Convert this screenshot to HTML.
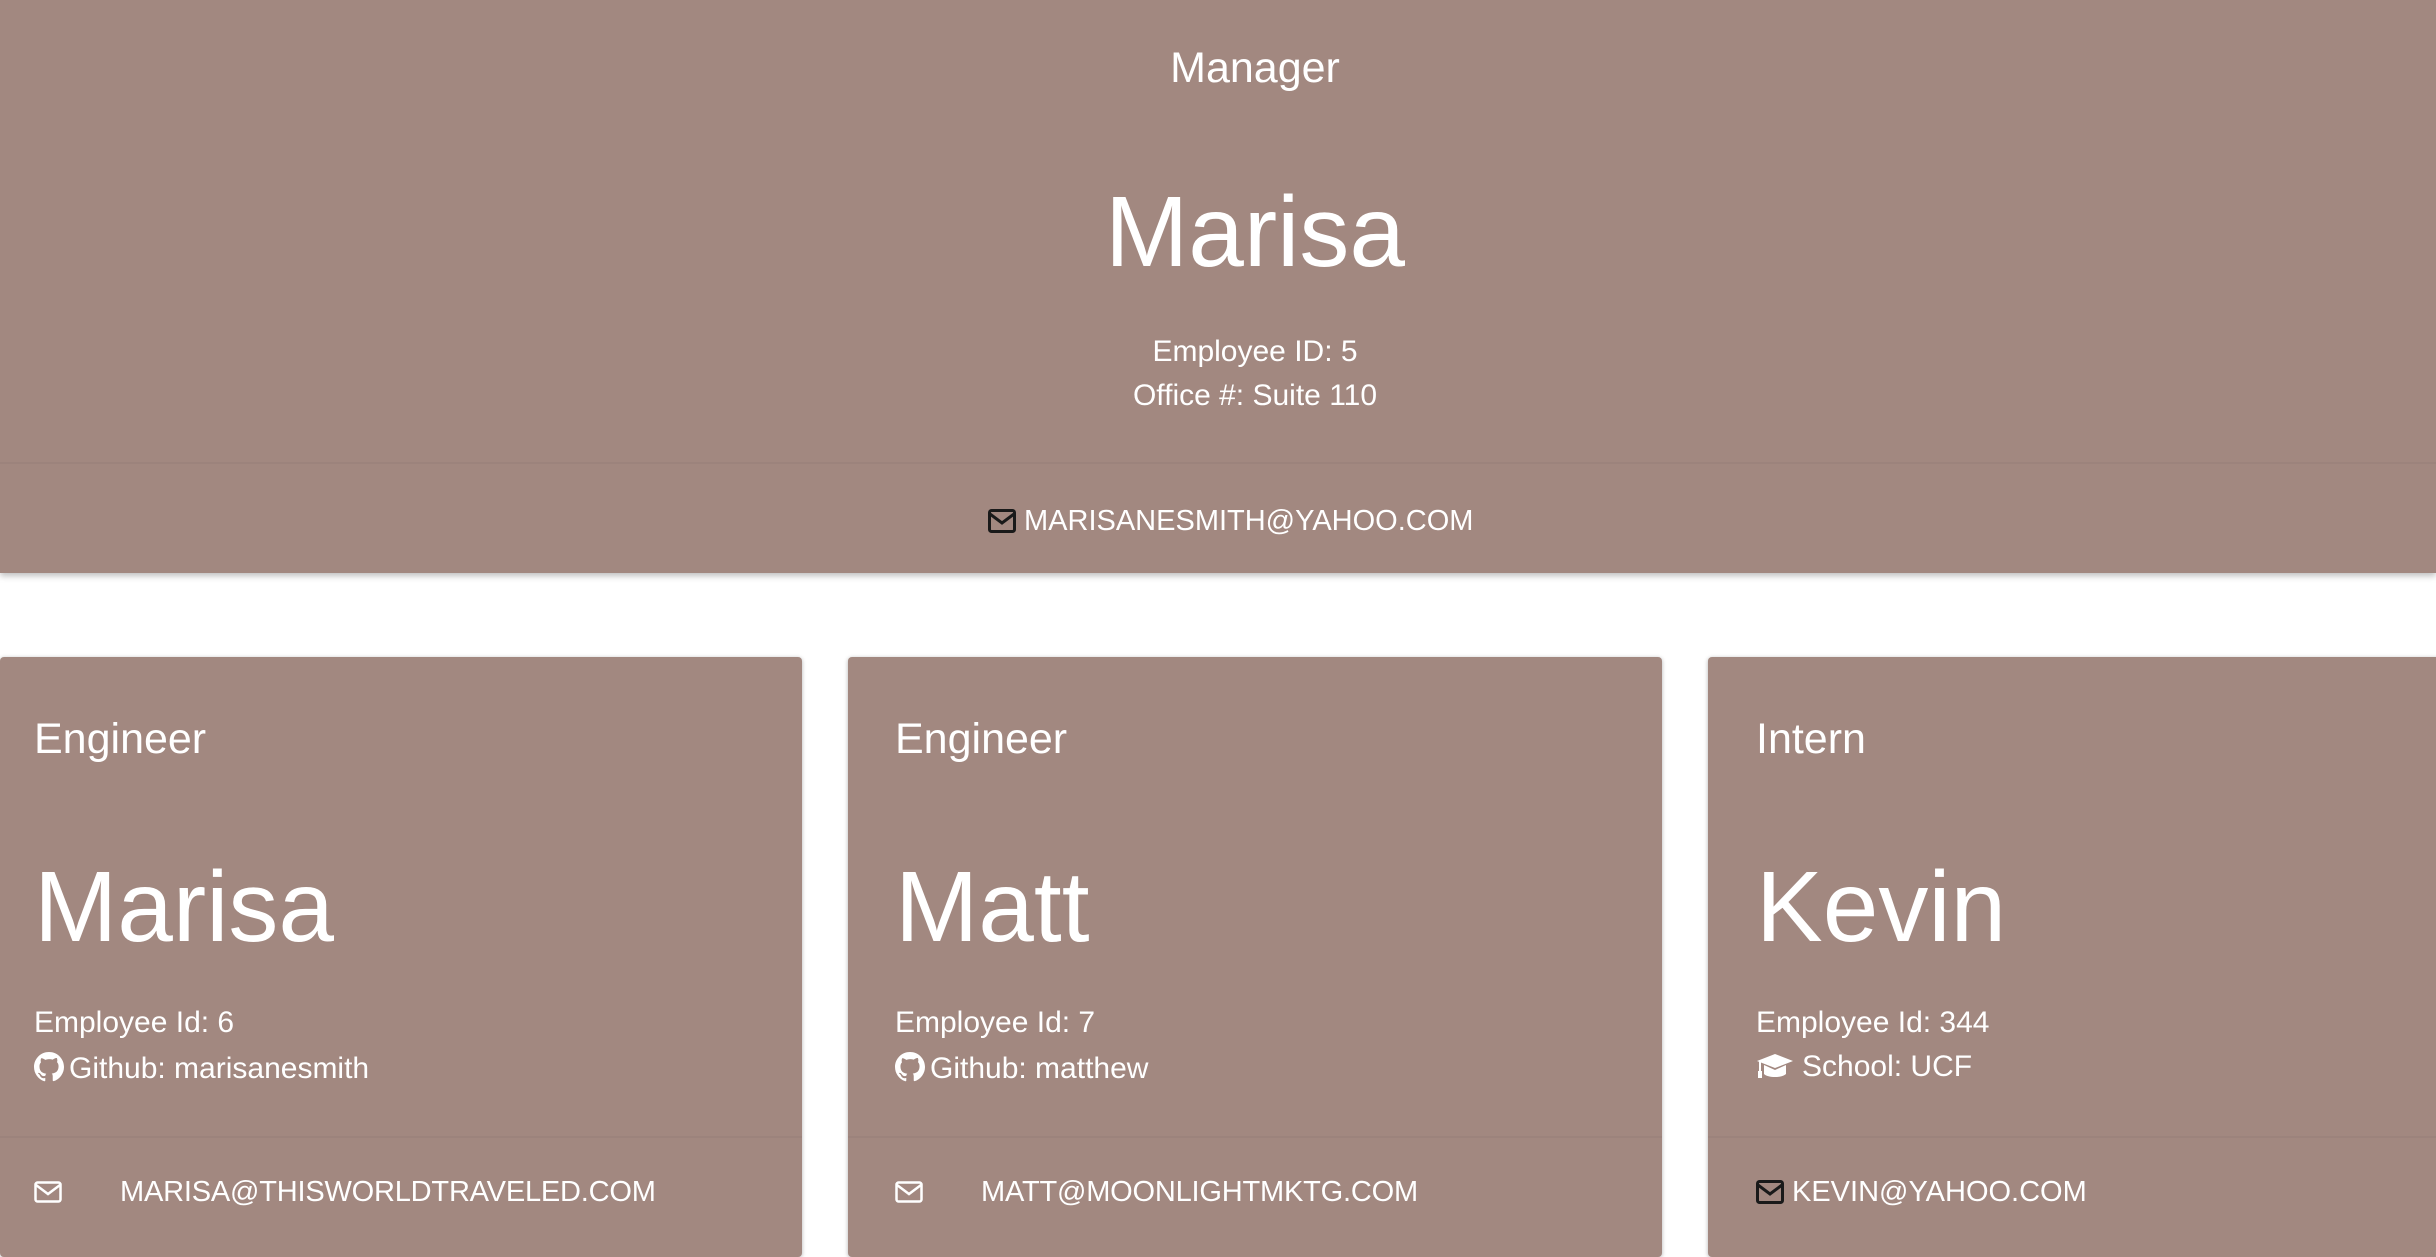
<!DOCTYPE html>
<html><head><meta charset="utf-8"><style>
*{margin:0;padding:0;box-sizing:border-box}
body{width:2436px;height:1234px;background:#fff;font-family:"Liberation Sans",sans-serif;color:#fff;position:relative;overflow:hidden}
.hdr{position:absolute;left:0;top:0;width:2436px;height:573px;background:#a28880;box-shadow:0 3px 6px rgba(0,0,0,.25)}
.line{position:absolute;left:0;height:2px;background:rgba(0,0,0,.03)}
.t{position:absolute;white-space:nowrap;line-height:1}
.c{transform:translateX(-50%)}
.card{position:absolute;top:657px;height:600px;background:#a28880;border-radius:4px;box-shadow:0 1px 4px rgba(0,0,0,.3)}
svg{display:inline-block;vertical-align:middle}
</style></head><body>
<div class="hdr">
<div class="t c" style="left:1255px;top:47px;font-size:43px">Manager</div>
<div class="t c" style="left:1255px;top:182px;font-size:100px">Marisa</div>
<div class="t c" style="left:1255px;top:337px;font-size:30px">Employee ID: 5</div>
<div class="t c" style="left:1255px;top:381px;font-size:30px">Office #: Suite 110</div>
<div class="line" style="top:462px;width:2436px"></div>
<div class="t" style="left:988px;top:507px;font-size:29px"><svg width="28" height="24" viewBox="0 0 28 24" style="margin-right:8px;vertical-align:-3px"><rect x="1.5" y="1.5" width="25" height="21" rx="2" fill="none" stroke="#1a1a1a" stroke-width="3"/><path d="M2 5 L14 14 L26 5" fill="none" stroke="#1a1a1a" stroke-width="3"/></svg>MARISANESMITH@YAHOO.COM</div>
</div>

<div class="card" style="left:0;width:802px">
<div class="t" style="left:34px;top:61px;font-size:43px">Engineer</div>
<div class="t" style="left:34px;top:200px;font-size:100px">Marisa</div>
<div class="t" style="left:34px;top:351px;font-size:30px">Employee Id: 6</div>
<div class="t" style="left:34px;top:395px;font-size:30px"><svg width="30" height="30" viewBox="0 0 16 16" style="vertical-align:-4px;margin-right:5px"><path fill="#fff" d="M8 0C3.58 0 0 3.58 0 8c0 3.54 2.29 6.53 5.47 7.59.4.07.55-.17.55-.38v-1.330c-2.23.48-2.7-1.07-2.7-1.07-.36-.92-.89-1.17-.89-1.17-.73-.5.06-.49.06-.49.8.06 1.23.83 1.23.83.72 1.22 1.87.87 2.33.66.07-.52.28-.87.5-1.07-1.78-.2-3.64-.89-3.64-3.95 0-.87.31-1.59.82-2.15-.08-.2-.36-1.02.08-2.12 0 0 .67-.21 2.2.82A7.6 7.6 0 018 3.8c.68 0 1.36.09 2 .27 1.53-1.04 2.2-.82 2.2-.82.44 1.1.16 1.92.08 2.12.51.56.82 1.27.82 2.15 0 3.07-1.87 3.75-3.65 3.95.29.25.54.73.54 1.48v2.2c0 .21.15.46.55.38A8.01 8.01 0 0016 8c0-4.42-3.58-8-8-8z"/></svg>Github: marisanesmith</div>
<div class="line" style="top:479px;width:802px"></div>
<div class="t" style="left:34px;top:521px;font-size:29px;letter-spacing:-0.2px"><svg width="28" height="22" viewBox="0 0 28 22" style="vertical-align:-2px;margin-right:58px"><rect x="1.5" y="1.5" width="25" height="19" rx="2" fill="none" stroke="#fff" stroke-width="2.5"/><path d="M2 4 L14 13 L26 4" fill="none" stroke="#fff" stroke-width="2.5"/></svg>MARISA@THISWORLDTRAVELED.COM</div>
</div>

<div class="card" style="left:848px;width:814px">
<div class="t" style="left:47px;top:61px;font-size:43px">Engineer</div>
<div class="t" style="left:47px;top:200px;font-size:100px">Matt</div>
<div class="t" style="left:47px;top:351px;font-size:30px">Employee Id: 7</div>
<div class="t" style="left:47px;top:395px;font-size:30px"><svg width="30" height="30" viewBox="0 0 16 16" style="vertical-align:-4px;margin-right:5px"><path fill="#fff" d="M8 0C3.58 0 0 3.58 0 8c0 3.54 2.29 6.53 5.47 7.59.4.07.55-.17.55-.38v-1.33c-2.23.48-2.7-1.07-2.7-1.07-.36-.92-.89-1.17-.89-1.17-.73-.5.06-.49.06-.49.8.06 1.23.83 1.23.83.72 1.22 1.87.87 2.33.66.07-.52.28-.87.5-1.07-1.78-.2-3.64-.89-3.64-3.95 0-.87.31-1.59.82-2.15-.08-.2-.36-1.02.08-2.12 0 0 .67-.21 2.2.82A7.6 7.6 0 018 3.8c.68 0 1.36.09 2 .27 1.53-1.04 2.2-.82 2.2-.82.44 1.1.16 1.92.08 2.12.51.56.82 1.27.82 2.15 0 3.07-1.87 3.75-3.65 3.95.29.25.54.73.54 1.48v2.2c0 .21.15.46.55.38A8.01 8.01 0 0016 8c0-4.42-3.58-8-8-8z"/></svg>Github: matthew</div>
<div class="line" style="top:479px;width:814px"></div>
<div class="t" style="left:47px;top:521px;font-size:29px;letter-spacing:-0.2px"><svg width="28" height="22" viewBox="0 0 28 22" style="vertical-align:-2px;margin-right:58px"><rect x="1.5" y="1.5" width="25" height="19" rx="2" fill="none" stroke="#fff" stroke-width="2.5"/><path d="M2 4 L14 13 L26 4" fill="none" stroke="#fff" stroke-width="2.5"/></svg>MATT@MOONLIGHTMKTG.COM</div>
</div>

<div class="card" style="left:1708px;width:740px">
<div class="t" style="left:48px;top:61px;font-size:43px">Intern</div>
<div class="t" style="left:48px;top:200px;font-size:100px">Kevin</div>
<div class="t" style="left:48px;top:351px;font-size:30px">Employee Id: 344</div>
<div class="t" style="left:48px;top:395px;font-size:30px"><svg width="38" height="26" viewBox="0 0 38 26" style="vertical-align:-3px;margin-right:8px"><path fill="#fff" d="M19 1 L37 8 L19 15 L1 8 Z"/><path fill="#fff" d="M8 12 L19 17 L30 12 L30 21 C26 25 12 25 8 21 Z"/><rect x="3" y="8" width="2" height="12" fill="#fff"/><rect x="2" y="18" width="4" height="7" fill="#fff"/></svg>School: UCF</div>
<div class="line" style="top:479px;width:740px"></div>
<div class="t" style="left:48px;top:521px;font-size:29px"><svg width="28" height="24" viewBox="0 0 28 24" style="vertical-align:-3px;margin-right:8px"><rect x="1.5" y="1.5" width="25" height="21" rx="2" fill="none" stroke="#1a1a1a" stroke-width="3"/><path d="M2 5 L14 14 L26 5" fill="none" stroke="#1a1a1a" stroke-width="3"/></svg>KEVIN@YAHOO.COM</div>
</div>
</body></html>
